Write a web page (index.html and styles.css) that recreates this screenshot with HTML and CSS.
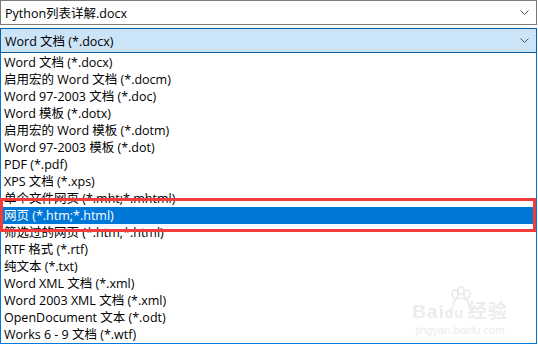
FILE: index.html
```html
<!DOCTYPE html>
<html lang="zh-CN">
<head>
    <meta charset="UTF-8">
    <title>另存为类型</title>
    <link rel="stylesheet" href="styles.css">
</head>
<body>

    <div class="page">
        <!-- file name box -->
        <div class="combo name-box">
            <span class="combo-text">Python列表详解.docx</span>
            <svg class="chevron" width="9" height="5" viewBox="0 0 9 5"><path d="M0.5 0.5 L4.5 4.5 L8.5 0.5" fill="none" stroke="#555" stroke-width="1"/></svg>
        </div>

        <!-- file type box, open -->
        <div class="combo type-box">
            <span class="combo-text">Word 文档 (*.docx)</span>
            <svg class="chevron" width="9" height="5" viewBox="0 0 9 5"><path d="M0.5 0.5 L4.5 4.5 L8.5 0.5" fill="none" stroke="#555" stroke-width="1"/></svg>
        </div>

        <ul class="type-list">
            <li>Word 文档 (*.docx)</li>
            <li>启用宏的 Word 文档 (*.docm)</li>
            <li>Word 97-2003 文档 (*.doc)</li>
            <li>Word 模板 (*.dotx)</li>
            <li>启用宏的 Word 模板 (*.dotm)</li>
            <li>Word 97-2003 模板 (*.dot)</li>
            <li>PDF (*.pdf)</li>
            <li>XPS 文档 (*.xps)</li>
            <li>单个文件网页 (*.mht;*.mhtml)</li>
            <li class="selected">网页 (*.htm;*.html)</li>
            <li>筛选过的网页 (*.htm;*.html)</li>
            <li>RTF 格式 (*.rtf)</li>
            <li>纯文本 (*.txt)</li>
            <li>Word XML 文档 (*.xml)</li>
            <li>Word 2003 XML 文档 (*.xml)</li>
            <li>OpenDocument 文本 (*.odt)</li>
            <li>Works 6 - 9 文档 (*.wtf)</li>
        </ul>

        <!-- highlight mark drawn over the list -->
        <div class="mark"></div>

        <div class="watermark">
            <svg class="wm-paw" width="30" height="22" viewBox="0 0 30 22">
                <g fill="none" stroke="#e8e8e8" stroke-width="1.5">
                    <ellipse cx="9" cy="8" rx="3" ry="4"/>
                    <ellipse cx="15" cy="4.5" rx="3" ry="4"/>
                    <ellipse cx="21" cy="8" rx="3" ry="4"/>
                    <path d="M7 20 C7 14 11 12 15 12 C19 12 23 14 23 20"/>
                </g>
            </svg>
            <div class="wm-logo">Bai<span class="wm-du">du</span>经验</div>
            <div class="wm-url">jingyan.baidu.com</div>
        </div>
    </div>

</body>
</html>
```

FILE: styles.css
```css
body {
    margin: 0;
    background-color: #fff;
    font-family: "Open Sans", "Noto Sans CJK SC", sans-serif;
    font-size: 12.5px;
    color: #000;
}

.page {
    position: relative;
    width: 538px;
    height: 344px;
    overflow: hidden;
}

.combo {
    display: flex;
    align-items: center;
    justify-content: space-between;
    width: 537px;
    height: 25px;
    box-sizing: border-box;
    padding: 0 5px 0 4px;
}

.name-box {
    border: 1px solid #7a7a7a;
    margin-bottom: 3px;
}

.type-box {
    border: 1px solid #0b5fa5;
    background-color: #cce4f7;
}

.chevron {
    margin-right: 2px;
}

.type-list {
    list-style: none;
    margin: 0;
    padding: 1px 0 0 0;
    width: 537px;
    box-sizing: border-box;
    border: 1px solid #0078d7;
    border-top: none;
}

.type-list li {
    height: 17px;
    line-height: 17px;
    padding-left: 3px;
    white-space: nowrap;
}

.type-list li.selected {
    background-color: #0078d7;
    color: #fff;
}

.mark {
    position: absolute;
    left: 0;
    top: 198px;
    width: 536px;
    height: 34px;
    box-sizing: border-box;
    border: 3px solid #f23b3b;
}

.watermark {
    position: absolute;
    left: 408px;
    top: 286px;
    width: 104px;
    text-align: center;
    color: #ececec;
}

.wm-paw {
    display: block;
    margin: 0 0 -6px 38px;
}

.wm-logo {
    font-family: "Liberation Sans", "Noto Sans CJK SC", sans-serif;
    font-size: 19px;
    font-weight: bold;
    line-height: 20px;
    letter-spacing: 1px;
}

.wm-du {
    font-size: 14px;
    margin-right: 4px;
}

.wm-url {
    font-family: "Liberation Sans", sans-serif;
    font-size: 11px;
    line-height: 14px;
}
```
